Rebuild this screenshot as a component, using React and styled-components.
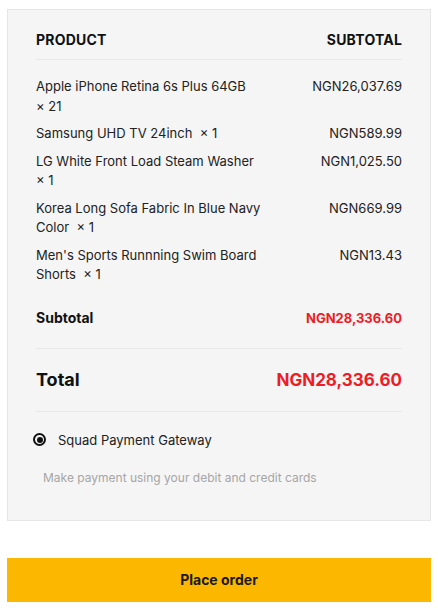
import React from "react";
import styled, { createGlobalStyle } from "styled-components";

const GlobalStyle = createGlobalStyle`
  body {
    margin: 0;
    background: #ffffff;
    font-family: "Inter", "Noto Sans", sans-serif;
    color: #222;
  }
`;

const Page = styled.div`
  padding: 9px 7px 12px 7px;
  display: flex;
  flex-direction: column;
  gap: 37px;
`;

const Card = styled.div`
  background-color: #f5f5f5;
  border: 1px solid #e6e6e6;
  padding: 20px 28px 33px 28px;
`;

const HeadRow = styled.div`
  display: flex;
  justify-content: space-between;
  align-items: center;
  padding-bottom: 9px;
  border-bottom: 1px solid #e8e8e8;
  font-size: 14px;
  line-height: 20px;
  font-weight: 700;
  color: #111;
  letter-spacing: 0.2px;
`;

const Items = styled.div`
  display: flex;
  flex-direction: column;
  gap: 8px;
  padding-top: 17px;
`;

const ItemRow = styled.div`
  display: grid;
  grid-template-columns: 232px 1fr;
  font-size: 13px;
  line-height: 19.5px;
  color: #222;
`;

const ItemName = styled.div`
  white-space: pre-wrap;
`;

const ItemPrice = styled.div`
  text-align: right;
`;

const SumRow = styled.div`
  display: flex;
  justify-content: space-between;
  align-items: center;
  padding: ${(p) => (p.$big ? "19px 0" : "0 0 20px 0")};
  margin-top: ${(p) => (p.$big ? "0" : "23px")};
  border-bottom: 1px solid #e8e8e8;
  font-weight: 700;
  font-size: ${(p) => (p.$big ? "18px" : "14px")};
  line-height: ${(p) => (p.$big ? "24px" : "20px")};
  color: #111;
`;

const Red = styled.span`
  color: #ee1c25;
  font-size: ${(p) => (p.$big ? "17px" : "13px")};
`;

const Method = styled.label`
  display: flex;
  align-items: center;
  gap: 12px;
  margin-top: 18px;
  margin-left: -3px;
  font-size: 13px;
  line-height: 20px;
  color: #222;
`;

const Radio = styled.span`
  width: 13px;
  height: 13px;
  border-radius: 50%;
  border: 2px solid #111;
  box-sizing: border-box;
  display: flex;
  align-items: center;
  justify-content: center;

  &::after {
    content: "";
    width: 6px;
    height: 6px;
    border-radius: 50%;
    background: #111;
  }
`;

const Desc = styled.p`
  margin: 19px 0 0 7px;
  font-size: 12px;
  line-height: 18px;
  color: #a6a6a6;
`;

const OrderButton = styled.button`
  height: 44px;
  width: 100%;
  border: none;
  background-color: #fcb800;
  font-family: inherit;
  font-size: 14px;
  font-weight: 700;
  color: #1a1a1a;
  cursor: pointer;
`;

const items = [
  { name: "Apple iPhone Retina 6s Plus 64GB", qty: 21, price: "NGN26,037.69" },
  { name: "Samsung UHD TV 24inch", qty: 1, price: "NGN589.99" },
  { name: "LG White Front Load Steam Washer", qty: 1, price: "NGN1,025.50" },
  { name: "Korea Long Sofa Fabric In Blue Navy Color", qty: 1, price: "NGN669.99" },
  { name: "Men's Sports Runnning Swim Board Shorts", qty: 1, price: "NGN13.43" },
];

export default function App() {
  return (
    <>
      <GlobalStyle />
      <Page>
        <Card>
          <HeadRow>
            <span>PRODUCT</span>
            <span>SUBTOTAL</span>
          </HeadRow>
          <Items>
            {items.map((it) => (
              <ItemRow key={it.name}>
                <ItemName>{`${it.name}  ×\u00a0${it.qty}`}</ItemName>
                <ItemPrice>{it.price}</ItemPrice>
              </ItemRow>
            ))}
          </Items>
          <SumRow>
            <span>Subtotal</span>
            <Red>NGN28,336.60</Red>
          </SumRow>
          <SumRow $big>
            <span>Total</span>
            <Red $big>NGN28,336.60</Red>
          </SumRow>
          <Method>
            <Radio />
            Squad Payment Gateway
          </Method>
          <Desc>Make payment using your debit and credit cards</Desc>
        </Card>
        <OrderButton>Place order</OrderButton>
      </Page>
    </>
  );
}
